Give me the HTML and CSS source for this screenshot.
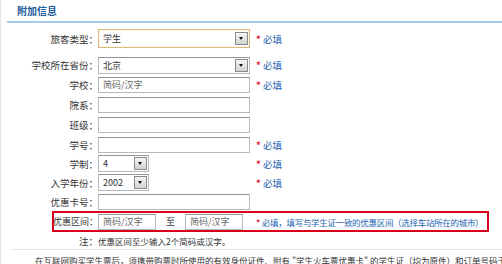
FILE: index.html
```html
<!DOCTYPE html>
<html lang="zh-CN">
<head>
<meta charset="utf-8">
<link rel="stylesheet" href="styles.css">
</head>
<body>
<div class="page">
  <div class="head"><h2 class="title">附加信息</h2></div>
  <div class="form">
    <div class="row r1">
      <div class="lab">旅客类型：</div>
      <div class="field"><div class="sel wide focus"><span class="val">学生</span><span class="btn"></span></div></div>
      <div class="note"><span class="star">*</span> 必填</div>
    </div>
    <div class="row r2">
      <div class="lab">学校所在省份：</div>
      <div class="field"><div class="sel wide"><span class="val">北京</span><span class="btn"></span></div></div>
      <div class="note"><span class="star">*</span> 必填</div>
    </div>
    <div class="row">
      <div class="lab">学校：</div>
      <div class="field"><div class="inp wide ph">简码/汉字</div></div>
      <div class="note"><span class="star">*</span> 必填</div>
    </div>
    <div class="row">
      <div class="lab">院系：</div>
      <div class="field"><div class="inp wide"></div></div>
    </div>
    <div class="row">
      <div class="lab">班级：</div>
      <div class="field"><div class="inp wide"></div></div>
    </div>
    <div class="row tight">
      <div class="lab">学号：</div>
      <div class="field"><div class="inp wide"></div></div>
      <div class="note"><span class="star">*</span> 必填</div>
    </div>
    <div class="row tight">
      <div class="lab">学制：</div>
      <div class="field"><div class="sel small"><span class="val">4</span><span class="btn"></span></div></div>
      <div class="note"><span class="star">*</span> 必填</div>
    </div>
    <div class="row tight">
      <div class="lab">入学年份：</div>
      <div class="field"><div class="sel small"><span class="val">2002</span><span class="btn"></span></div></div>
      <div class="note"><span class="star">*</span> 必填</div>
    </div>
    <div class="row tight">
      <div class="lab">优惠卡号：</div>
      <div class="field"><div class="inp wide"></div></div>
    </div>
    <div class="row range">
      <div class="lab"><span>优惠区间：</span></div>
      <div class="field pair">
        <div class="inp half ph">简码/汉字</div>
        <span class="to">至</span>
        <div class="inp half ph">简码/汉字</div>
      </div>
      <div class="note long"><span class="star">*</span> 必填，填写与学生证一致的优惠区间（选择车站所在的城市）</div>
    </div>
    <div class="row tip">
      <div class="lab">注：</div>
      <div class="tiptext">优惠区间至少输入2个简码或汉字。</div>
    </div>
  </div>
  <p class="foot">在互联网购买学生票后，须携带购票时所使用的有效身份证件、附有 "学生火车票优惠卡" 的学生证（均为原件）和订单号码于预留时间内到车站换取车票。</p>
</div>
</body>
</html>
```
FILE: styles.css
```css
html, body {
  margin: 0;
  padding: 0;
  background: #fff;
}
body {
  font-family: "Noto Sans CJK SC", "Liberation Sans", sans-serif;
  font-size: 9.5px;
  color: #333;
  width: 502px;
  height: 264px;
  overflow: hidden;
}
.page {
  border-left: 1px solid #e6e6e6;
  height: 264px;
  box-sizing: border-box;
  overflow: hidden;
}
.head {
  margin-left: 6px;
  border-bottom: 2px solid #a9c7e6;
  height: 21px;
}
.title {
  margin: 0;
  padding: 4px 0 0 10px;
  font-size: 10px;
  line-height: 14px;
  font-weight: bold;
  color: #1f5d9b;
}
.form {
  padding-top: 5px;
}
.row {
  display: flex;
  align-items: center;
  height: 20px;
}
.row.r1 {
  margin-bottom: 6px;
  height: 21px;
}
.row.tight {
  height: 19px;
}
.lab {
  width: 97px;
  flex: none;
  text-align: right;
  white-space: nowrap;
  color: #333;
}
.field {
  width: 158px;
  flex: none;
  display: flex;
  align-items: center;
}
.note {
  color: #2565b0;
  white-space: nowrap;
}
.note.long {
  font-size: 8.5px;
  letter-spacing: -0.3px;
}
.star {
  color: #e3173a;
  font-weight: bold;
  letter-spacing: 0;
}
.inp, .sel {
  box-sizing: border-box;
  height: 16px;
  border: 1px solid #b5b9bf;
  border-top-color: #8e949b;
  background: #fff;
  line-height: 14px;
  padding-left: 4px;
  white-space: nowrap;
  font-size: 9px;
}
.wide { width: 152px; }
.small { width: 51px; }
.half { width: 58px; }
.ph { color: #666; }
.sel {
  position: relative;
  height: 17px;
  line-height: 15px;
}
.sel.focus {
  border-color: #d9b980;
  box-shadow: inset 0 0 2px #f2e4c4;
  height: 19px;
  line-height: 17px;
}
.val { color: #333; }
.btn {
  position: absolute;
  right: 1px;
  top: 1px;
  width: 11px;
  height: 11px;
  border: 1px solid #8b8b8b;
  background: linear-gradient(#f6f6f6, #d2d2d2);
}
.sel.focus .btn { top: 2px; }
.btn::after {
  content: "";
  position: absolute;
  left: 3px;
  top: 4px;
  border-left: 2.5px solid transparent;
  border-right: 2.5px solid transparent;
  border-top: 3px solid #111;
}
.row.range {
  box-sizing: border-box;
  margin: 0 13px 0 51px;
  height: 21px;
  border: 2px solid #d9001b;
}
.row.range .lab {
  width: 44px;
  display: flex;
  justify-content: flex-end;
  font-size: 9px;
}
.pair { width: 158px; }
.to {
  width: 29px;
  text-align: center;
  color: #333;
  font-size: 9px;
}
.row.tip {
  height: 17px;
}
.tiptext {
  color: #333;
  font-size: 8.5px;
}
.foot {
  margin: 0 0 0 10px;
  padding: 2px 0 0 24px;
  border-top: 1px solid #e6e6e6;
  white-space: nowrap;
  color: #333;
  line-height: 16px;
  font-size: 8.5px;
}
```
